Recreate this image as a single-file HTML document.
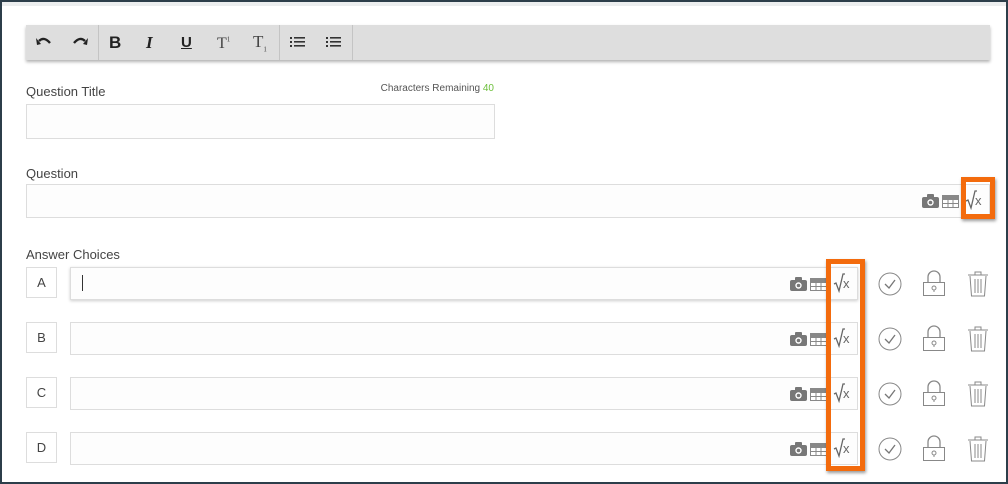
<!DOCTYPE html>
<html><head><style>
*{box-sizing:border-box;margin:0;padding:0}
body{width:1008px;height:484px;background:#2c3e4a;position:relative;overflow:hidden;font-family:"Liberation Sans",sans-serif;color:#444}
.page{position:absolute;left:2px;top:2px;right:2px;bottom:2px;background:#fff;border-top:4px solid #eceeef}
.a{position:absolute}
.tb{left:26px;top:25px;width:964px;height:35px;background:#dedede;box-shadow:0 2px 3px rgba(0,0,0,.3)}
.sep{top:25px;width:1px;height:35px;background:#c4c4c4}
.ti{top:33px;font-size:17px;color:#222;font-weight:bold}
.lbl{font-size:13px;color:#444}
.inp{border:1px solid #ddd;background:#fdfdfd}
.let{width:31px;height:31px;border:1px solid #ddd;font-size:13px;text-align:center;line-height:29px}
.or{border:5px solid #f36b0d;box-shadow:1px 2px 3px rgba(0,0,0,.4)}
.sq{font-size:13px;color:#666}
</style></head><body><div class="page"></div>
<div class="a tb"></div>
<div class="a sep" style="left:98px"></div><div class="a sep" style="left:279px"></div><div class="a sep" style="left:352px"></div>
<svg class="a" style="left:36px;top:36px" width="16" height="12" viewBox="0 0 16 12"><path d="M3 5 Q8 0 14 7" stroke="#222" stroke-width="2.4" fill="none"/><path d="M0 2 L5 8 L1 9Z" fill="#222"/></svg>
<svg class="a" style="left:72px;top:36px" width="16" height="12" viewBox="0 0 16 12"><path d="M13 5 Q8 0 2 7" stroke="#222" stroke-width="2.4" fill="none"/><path d="M16 2 L11 8 L15 9Z" fill="#222"/></svg>
<div class="a ti" style="left:109px">B</div>
<div class="a ti" style="left:146px;font-style:italic;font-family:'Liberation Serif',serif">I</div>
<div class="a ti" style="left:181px;text-decoration:underline;font-size:15px;top:34px">U</div>
<div class="a" style="left:217px;top:35px;font-family:'Liberation Serif',serif;font-size:16px;color:#444">T<sup style="font-size:7px">1</sup></div>
<div class="a" style="left:253px;top:32px;font-family:'Liberation Serif',serif;font-size:17px;color:#444">T<sub style="font-size:7px">1</sub></div>
<svg class="a" style="left:290px;top:37px" width="16" height="11"><g fill="#333"><rect x="0" y="0" width="2" height="2"/><rect x="0" y="4" width="2" height="2"/><rect x="0" y="8" width="2" height="2"/><rect x="4" y="0" width="11" height="1.6"/><rect x="4" y="4" width="11" height="1.6"/><rect x="4" y="8" width="11" height="1.6"/></g></svg>
<svg class="a" style="left:326px;top:37px" width="16" height="11"><g fill="#333"><rect x="0" y="0" width="2" height="2"/><rect x="0" y="4" width="2" height="2"/><rect x="0" y="8" width="2" height="2"/><rect x="4" y="0" width="11" height="1.6"/><rect x="4" y="4" width="11" height="1.6"/><rect x="4" y="8" width="11" height="1.6"/></g></svg>
<div class="a lbl" style="left:26px;top:84px">Question Title</div>
<div class="a" style="left:373px;top:83px;font-size:10px;color:#555;width:121px;text-align:right;white-space:nowrap">Characters Remaining <span style="color:#6cbf3a">40</span></div>
<div class="a inp" style="left:26px;top:104px;width:469px;height:35px"></div>
<div class="a lbl" style="left:26px;top:166px">Question</div>
<div class="a inp" style="left:26px;top:184px;width:964px;height:34px"></div>
<div class="a lbl" style="left:26px;top:247px">Answer Choices</div>
<div id="rows"></div>
<div class="a or" style="left:961px;top:177px;width:34px;height:42px"></div>
<div class="a or" style="left:826px;top:259px;width:39px;height:212px"></div>
<script>
function icons(x,y){return `
<svg class="a" style="left:${x}px;top:${y}px" width="18" height="14"><rect x="0" y="3" width="17" height="11" rx="2" fill="#777"/><rect x="5" y="0" width="7" height="4" rx="1" fill="#777"/><circle cx="8.5" cy="8.5" r="3.2" fill="#fff"/><circle cx="8.5" cy="8.5" r="1.8" fill="#777"/></svg>
<svg class="a" style="left:${x+20}px;top:${y+1}px" width="17" height="13"><rect x="0.5" y="0.5" width="16" height="12" fill="#fff" stroke="#888"/><path d="M0 4.5H17M0 8.5H17M6 4V13M11 4V13" stroke="#888"/><rect x="0" y="0" width="17" height="4" fill="#888"/></svg>
<svg class="a" style="left:${x+43}px;top:${y-4}px" width="12" height="20"><path d="M1 11 L3 10 L6 18 L10 1 H12" stroke="#666" stroke-width="1.3" fill="none"/></svg>
<div class="a sq" style="left:${x+53}px;top:${y-1}px">x</div>`}
let h=icons(922,194);
const L=['A','B','C','D'];
for(let i=0;i<4;i++){const y=267+i*55;
h+=`<div class="a let" style="left:26px;top:${y}px">${L[i]}</div>
<div class="a inp" style="left:70px;top:${y}px;width:788px;height:33px;${i==0?'box-shadow:0 1px 3px rgba(0,0,0,.2)':''}"></div>
${i==0?`<div class="a" style="left:82px;top:${y+8}px;width:1px;height:16px;background:#333"></div>`:''}
${icons(790,y+10)}
<svg class="a" style="left:878px;top:${y+5}px" width="24" height="24"><circle cx="12" cy="12" r="11" fill="none" stroke="#888"/><path d="M7 12 L11 16 L17 8" stroke="#777" fill="none" stroke-width="1.3"/></svg>
<svg class="a" style="left:922px;top:${y+3}px" width="24" height="27"><path d="M6 12V7a6 6 0 0 1 12 0v5" fill="none" stroke="#888" stroke-width="1.3"/><rect x="1.5" y="12.5" width="21" height="13" fill="#fff" stroke="#888"/><circle cx="12" cy="18" r="2" fill="none" stroke="#888"/><path d="M12 20v2" stroke="#888"/></svg>
<svg class="a" style="left:967px;top:${y+4}px" width="22" height="26"><path d="M1 4H21M8 4V1H14V4" fill="none" stroke="#888"/><path d="M3 5L4.5 25H17.5L19 5" fill="none" stroke="#888"/><path d="M8 8V22M11 8V22M14 8V22" stroke="#888"/></svg>`;}
document.getElementById('rows').outerHTML=h;
</script>
</body></html>
